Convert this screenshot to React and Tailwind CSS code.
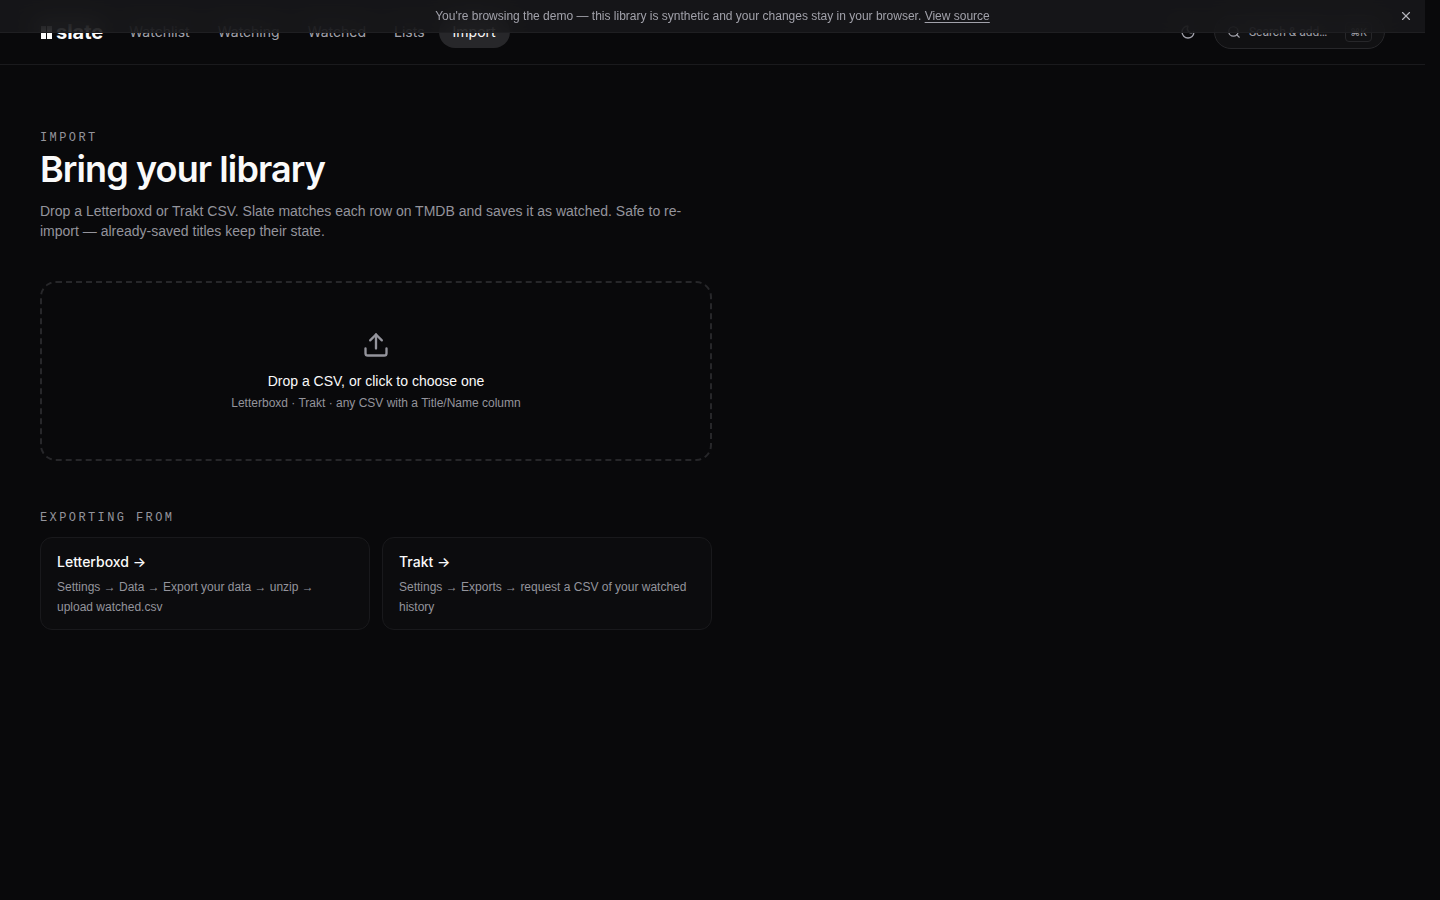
import React from 'react'
import { Moon, Search, Upload, X } from 'lucide-react'

const navItems = ['Watchlist', 'Watching', 'Watched', 'Lists', 'Import']

const sources = [
  {
    name: 'Letterboxd',
    href: '#letterboxd',
    steps: 'Settings → Data → Export your data → unzip → upload watched.csv',
  },
  {
    name: 'Trakt',
    href: '#trakt',
    steps: 'Settings → Exports → request a CSV of your watched history',
  },
]

const DemoBanner = ({ onClose }) => (
  <div className="fixed top-0 left-0 right-[15px] z-50 flex items-center justify-center border-b border-[#1f1f22] bg-[#19191b]/80 px-10 py-2 text-xs leading-4 text-[#a1a1aa] backdrop-blur-md">
    <p>
      You're browsing the demo — this library is synthetic and your changes stay in your browser.{' '}
      <a href="#source" className="underline underline-offset-2">View source</a>
    </p>
    <button type="button" aria-label="Dismiss" onClick={onClose} className="absolute right-3 text-[#b4b4bb]">
      <X size={14} />
    </button>
  </div>
)

const Header = () => (
  <header className="flex h-[65px] items-center justify-between border-b border-[#1a1a1d] px-10">
    <div className="flex items-center gap-3 font-[Inter,sans-serif]">
      <a href="#home" className="flex items-center gap-1 text-xl font-bold text-[#fafafa]">
        <svg width="12" height="13" viewBox="0 0 12 13" fill="currentColor" aria-hidden="true">
          <rect x="1" y="0" width="5" height="13" />
          <rect x="7" y="0" width="5" height="13" />
        </svg>
        slate
      </a>
      <nav className="flex items-center text-sm">
        {navItems.map((item) => (
          <a
            key={item}
            href={`#${item.toLowerCase()}`}
            className={
              item === 'Import'
                ? 'flex h-8 items-center rounded-full bg-[#27272a] px-3.5 text-[#fafafa]'
                : 'flex h-8 items-center rounded-full px-3.5 text-[#a1a1aa]'
            }
          >
            {item}
          </a>
        ))}
      </nav>
    </div>
    <div className="flex items-center gap-2.5">
      <button type="button" aria-label="Toggle theme" className="flex size-8 items-center justify-center text-[#a1a1aa]">
        <Moon size={16} />
      </button>
      <button type="button" className="flex h-[34px] items-center gap-2 rounded-full border border-[#27272a] bg-[#111113] px-3 text-xs text-[#a1a1aa]">
        <Search size={14} />
        <span className="pr-2.5 font-[Roboto,sans-serif]">Search &amp; add…</span>
        <kbd className="rounded border border-[#27272a] px-1 font-[Inter,sans-serif] text-[10px] leading-[18px]">⌘K</kbd>
      </button>
    </div>
  </header>
)

const SourceCard = ({ name, href, steps }) => (
  <a href={href} className="rounded-xl border border-[#19191c] bg-[#0c0c0e] px-4 pt-3.5 pb-3">
    <p className="font-[Inter,sans-serif] text-sm leading-5 font-medium text-[#fafafa]">{name} →</p>
    <p className="mt-[5px] text-xs leading-5 text-[#94949c]">{steps}</p>
  </a>
)

const App = () => {
  const [showBanner, setShowBanner] = React.useState(true)

  return (
    <div className="min-h-screen bg-[#09090b] pr-[15px] font-['Liberation_Sans',sans-serif] text-[#fafafa] antialiased">
      {showBanner && <DemoBanner onClose={() => setShowBanner(false)} />}
      <Header />
      <main className="px-10 pt-16 pb-16">
        <div className="max-w-2xl">
          <p className="font-['Liberation_Mono',monospace] text-xs leading-[18px] tracking-[0.2em] text-[#94949c] uppercase">Import</p>
          <h1 className="mt-0.5 font-[Inter,sans-serif] text-4xl leading-10 font-semibold tracking-tight">Bring your library</h1>
          <p className="mt-3 text-sm leading-5 text-[#94949c]">
            Drop a Letterboxd or Trakt CSV. Slate matches each row on TMDB and saves it as watched. Safe to re-import — already-saved titles keep their state.
          </p>

          <label className="mt-10 flex cursor-pointer flex-col items-center rounded-2xl border-2 border-dashed border-[#27272a] py-12 text-center">
            <Upload size={28} className="text-[#94949c]" />
            <span className="mt-3 text-sm leading-5">Drop a CSV, or click to choose one</span>
            <span className="mt-1 text-xs leading-4 text-[#94949c]">Letterboxd · Trakt · any CSV with a Title/Name column</span>
            <input type="file" accept=".csv" className="sr-only" />
          </label>

          <h2 className="mt-12 font-['Liberation_Mono',monospace] text-xs leading-[18px] tracking-[0.2em] text-[#94949c] uppercase">Exporting from</h2>
          <div className="mt-2.5 grid grid-cols-2 gap-3">
            {sources.map((source) => (
              <SourceCard key={source.name} {...source} />
            ))}
          </div>
        </div>
      </main>
    </div>
  )
}

export default App
